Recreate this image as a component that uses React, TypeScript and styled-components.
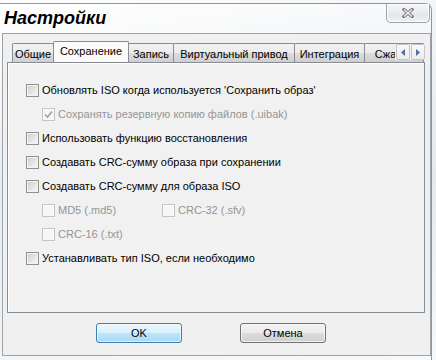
import React from "react";
import styled, { createGlobalStyle } from "styled-components";

const Global = createGlobalStyle`
  html, body { margin: 0; padding: 0; }
  body {
    width: 436px; height: 360px; overflow: hidden;
    background: #eef1f4;
    font-family: "Liberation Sans", Arial, sans-serif;
  }
`;

const Desktop = styled.div`
  width: 436px;
  height: 360px;
  overflow: hidden;
  box-sizing: border-box;
  padding-top: 3px;
  background: linear-gradient(160deg, #ffffff 0%, #f1f3f5 35%, #e6e9ec 65%, #f7f8f9 100%);
`;

const Window = styled.div`
  width: 432px;
  height: 357px;
  box-sizing: border-box;
  border-top: 1px solid #8e979f;
  border-right: 1px solid #8e979f;
  border-top-right-radius: 7px;
  display: flex;
  flex-direction: column;
  background: linear-gradient(175deg, rgba(255,255,255,0.7), rgba(228,232,236,0.6) 45%, rgba(248,249,250,0.8));
`;

const TitleBar = styled.div`
  height: 29px;
  display: flex;
  justify-content: space-between;
  align-items: flex-start;
  padding-left: 4px;
`;

const Title = styled.div`
  padding-top: 4px;
  font-family: "Liberation Sans", Arial, sans-serif;
  font-weight: bold;
  font-style: italic;
  font-size: 18px;
  line-height: 21px;
  color: #000;
  text-shadow: 0 0 6px #fff, 0 0 10px #fff, 0 0 3px #fff;
`;

const CloseButton = styled.div`
  width: 44px;
  height: 19px;
  margin-right: 1px;
  box-sizing: border-box;
  border: 1px solid #9aa2aa;
  border-top: none;
  border-radius: 0 0 5px 5px;
  background: linear-gradient(#f4f5f6, #e9ecef 50%, #e2e6ea 50%, #eef0f2);
  box-shadow: inset 0 0 0 1px rgba(255,255,255,0.8);
  display: flex;
  align-items: center;
  justify-content: center;
`;

const Client = styled.div`
  margin-left: 2px;
  width: 429px;
  height: 323px;
  box-sizing: border-box;
  border: 1px solid #9ba3ab;
  background: #f0f0f0;
  padding: 7px 5px 12px 4px;
  display: flex;
  flex-direction: column;
`;

const TabStrip = styled.div`
  position: relative;
  height: 21px;
  display: flex;
  align-items: flex-end;
  padding-left: 5px;
  overflow: hidden;
  z-index: 1;
`;

const Tab = styled.div<{ $w: number; $active?: boolean }>`
  flex: none;
  width: ${(p) => p.$w}px;
  height: ${(p) => (p.$active ? 22 : 19)}px;
  margin: ${(p) => (p.$active ? "0 0 -1px -1px" : "0 0 0 -1px")};
  position: relative;
  z-index: ${(p) => (p.$active ? 2 : 1)};
  box-sizing: border-box;
  border: 1px solid #898c95;
  border-bottom: none;
  border-radius: 2px 2px 0 0;
  background: ${(p) =>
    p.$active ? "#fbfbfb" : "linear-gradient(#f2f2f2, #ebebeb 50%, #dddddd 50%, #cfcfcf)"};
  font-size: 11px;
  line-height: 11px;
  color: #000;
  white-space: nowrap;
  overflow: hidden;
  text-align: center;
  padding-top: ${(p) => (p.$active ? 4 : 5)}px;
  &:first-child { margin-left: 0; }
`;

const Scroller = styled.div`
  position: absolute;
  right: 0;
  top: 3px;
  z-index: 3;
  display: flex;
  gap: 1px;
  background: #f0f0f0;
  padding-left: 1px;
`;

const ScrollBtn = styled.div`
  width: 14px;
  height: 16px;
  box-sizing: border-box;
  border: 1px solid #c2c6cc;
  border-radius: 2px;
  background: linear-gradient(#fafafa, #ececec);
  display: flex;
  align-items: center;
  justify-content: center;
`;

const Panel = styled.div`
  height: 251px;
  box-sizing: border-box;
  border: 1px solid #898c95;
  background: #f1f1f1;
  box-shadow: inset 1px 1px 0 #ffffff;
  padding: 15px 0 0 18px;
  display: flex;
  flex-direction: column;
`;

const Row = styled.div<{ $indent?: number }>`
  height: 24px;
  display: flex;
  align-items: center;
  gap: 3px;
  margin-left: ${(p) => p.$indent ?? 0}px;
`;

const SubGrid = styled.div`
  display: grid;
  grid-template-columns: 120px 120px;
  margin-left: 16px;
`;

const Box = styled.span<{ $disabled?: boolean }>`
  flex: none;
  width: 13px;
  height: 13px;
  box-sizing: border-box;
  border: 1px solid ${(p) => (p.$disabled ? "#c4c4c4" : "#8e8f8f")};
  background: ${(p) =>
    p.$disabled ? "#f6f6f6" : "linear-gradient(135deg, #cbcbcb, #e6e6e6 55%, #f6f6f6)"};
  box-shadow: inset 0 0 0 1px ${(p) => (p.$disabled ? "#fafafa" : "#f4f4f4")};
  display: flex;
  align-items: center;
  justify-content: center;
`;

const Label = styled.span<{ $disabled?: boolean }>`
  font-size: 11px;
  line-height: 13px;
  color: ${(p) => (p.$disabled ? "#959595" : "#000")};
  white-space: nowrap;
`;

const ButtonRow = styled.div`
  margin-top: 10px;
  display: flex;
  gap: 58px;
  padding-left: 89px;
`;

const Button = styled.div<{ $default?: boolean }>`
  width: 86px;
  height: 20px;
  box-sizing: border-box;
  border: 1px solid ${(p) => (p.$default ? "#3c7fb1" : "#707070")};
  border-radius: 3px;
  background: ${(p) =>
    p.$default
      ? "linear-gradient(#eaf6fd, #d9f0fc 50%, #bee6fd 50%, #a7d9f5)"
      : "linear-gradient(#f2f2f2, #ebebeb 50%, #dddddd 50%, #cfcfcf)"};
  box-shadow: inset 0 0 0 1px ${(p) => (p.$default ? "rgba(255,255,255,0.6)" : "rgba(255,255,255,0.7)")};
  display: flex;
  align-items: center;
  justify-content: center;
  font-size: 11px;
  color: #000;
`;

const Check = () => (
  <svg width="9" height="9" viewBox="0 0 9 9">
    <path d="M1 4.5 L3.5 7 L8 1.5" fill="none" stroke="#a2a2a2" strokeWidth="1.6" />
  </svg>
);

const CloseX = () => (
  <svg width="12" height="10" viewBox="0 0 12 10">
    <path d="M2 1.5 L10 8.5 M10 1.5 L2 8.5" stroke="#7c7c7c" strokeWidth="3.2" strokeLinecap="square" />
    <path d="M2 1.5 L10 8.5 M10 1.5 L2 8.5" stroke="#f2f2f2" strokeWidth="1.3" />
  </svg>
);

const Arrow = ({ dir }: { dir: "l" | "r" }) => (
  <svg width="4" height="7" viewBox="0 0 4 7">
    <path d={dir === "l" ? "M4 0 L0 3.5 L4 7 Z" : "M0 0 L4 3.5 L0 7 Z"} fill="#4d6fa6" />
  </svg>
);

const CheckRow = ({
  label,
  disabled,
  checked,
  indent,
}: {
  label: string;
  disabled?: boolean;
  checked?: boolean;
  indent?: number;
}) => (
  <Row $indent={indent}>
    <Box $disabled={disabled}>{checked && <Check />}</Box>
    <Label $disabled={disabled}>{label}</Label>
  </Row>
);

const tabs = [
  { t: "Общие", w: 42 },
  { t: "Сохранение", w: 76, active: true },
  { t: "Запись", w: 46 },
  { t: "Виртуальный привод", w: 122 },
  { t: "Интеграция", w: 71 },
  { t: "Сжатие", w: 60 },
];

export default function App() {
  return (
    <>
      <Global />
      <Desktop>
        <Window>
          <TitleBar>
            <Title>Настройки</Title>
            <CloseButton>
              <CloseX />
            </CloseButton>
          </TitleBar>
          <Client>
            <TabStrip>
              {tabs.map((t) => (
                <Tab key={t.t} $w={t.w} $active={t.active}>
                  {t.t}
                </Tab>
              ))}
              <Scroller>
                <ScrollBtn>
                  <Arrow dir="l" />
                </ScrollBtn>
                <ScrollBtn>
                  <Arrow dir="r" />
                </ScrollBtn>
              </Scroller>
            </TabStrip>
            <Panel>
              <CheckRow label="Обновлять ISO когда используется 'Сохранить образ'" />
              <CheckRow label="Сохранять резервную копию файлов (.uibak)" disabled checked indent={16} />
              <CheckRow label="Использовать функцию восстановления" />
              <CheckRow label="Создавать CRC-сумму образа при сохранении" />
              <CheckRow label="Создавать CRC-сумму для образа ISO" />
              <SubGrid>
                <CheckRow label="MD5 (.md5)" disabled />
                <CheckRow label="CRC-32 (.sfv)" disabled />
                <CheckRow label="CRC-16 (.txt)" disabled />
              </SubGrid>
              <CheckRow label="Устанавливать тип ISO, если необходимо" />
            </Panel>
            <ButtonRow>
              <Button $default>OK</Button>
              <Button>Отмена</Button>
            </ButtonRow>
          </Client>
        </Window>
      </Desktop>
    </>
  );
}
